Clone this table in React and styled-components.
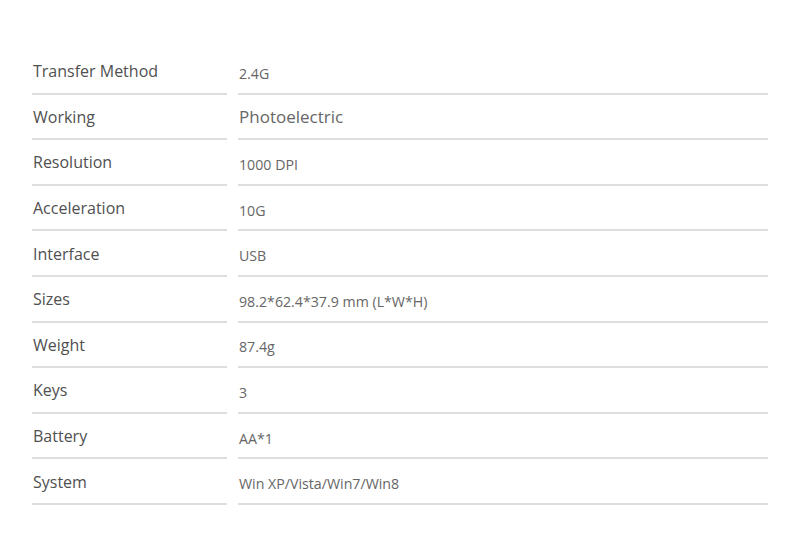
import React from "react";
import styled, { createGlobalStyle } from "styled-components";

const GlobalStyle = createGlobalStyle`
    html, body {
        margin: 0;
        padding: 0;
        background: #fff;
    }
    body {
        font-family: "Open Sans", "Liberation Sans", sans-serif;
    }
`;

const Page = styled.div`
    width: 800px;
    height: 558px;
    padding: 49px 32px 0 32px;
    box-sizing: border-box;
`;

const Table = styled.div`
    display: grid;
    grid-template-columns: 195px 530px;
    column-gap: 11px;
    grid-auto-rows: 45.6px;
`;

const Cell = styled.div`
    display: flex;
    align-items: center;
    box-sizing: border-box;
    border-bottom: 2px solid #dedede;
    padding-top: ${props => props.$shift || 0}px;
`;

const Label = styled(Cell)`
    font-size: 16px;
    color: #505050;
    padding-left: 1px;
`;

const Value = styled(Cell)`
    font-size: ${props => props.$size || 14.2}px;
    color: #666;
    padding-left: 1px;
`;

const specs = [
    { label: "Transfer Method", value: "2.4G" },
    { label: "Working", value: "Photoelectric", size: 17 },
    { label: "Resolution", value: "1000 DPI" },
    { label: "Acceleration", value: "10G" },
    { label: "Interface", value: "USB" },
    { label: "Sizes", value: "98.2*62.4*37.9 mm (L*W*H)" },
    { label: "Weight", value: "87.4g" },
    { label: "Keys", value: "3" },
    { label: "Battery", value: "AA*1" },
    { label: "System", value: "Win XP/Vista/Win7/Win8" }
];

const App = () => (
    <>
        <GlobalStyle />
        <Page>
            <Table>
                {specs.map(spec => (
                    <React.Fragment key={spec.label}>
                        <Label $shift={1}>{spec.label}</Label>
                        <Value $size={spec.size} $shift={spec.size ? 1 : 5}>{spec.value}</Value>
                    </React.Fragment>
                ))}
            </Table>
        </Page>
    </>
);

export default App;
